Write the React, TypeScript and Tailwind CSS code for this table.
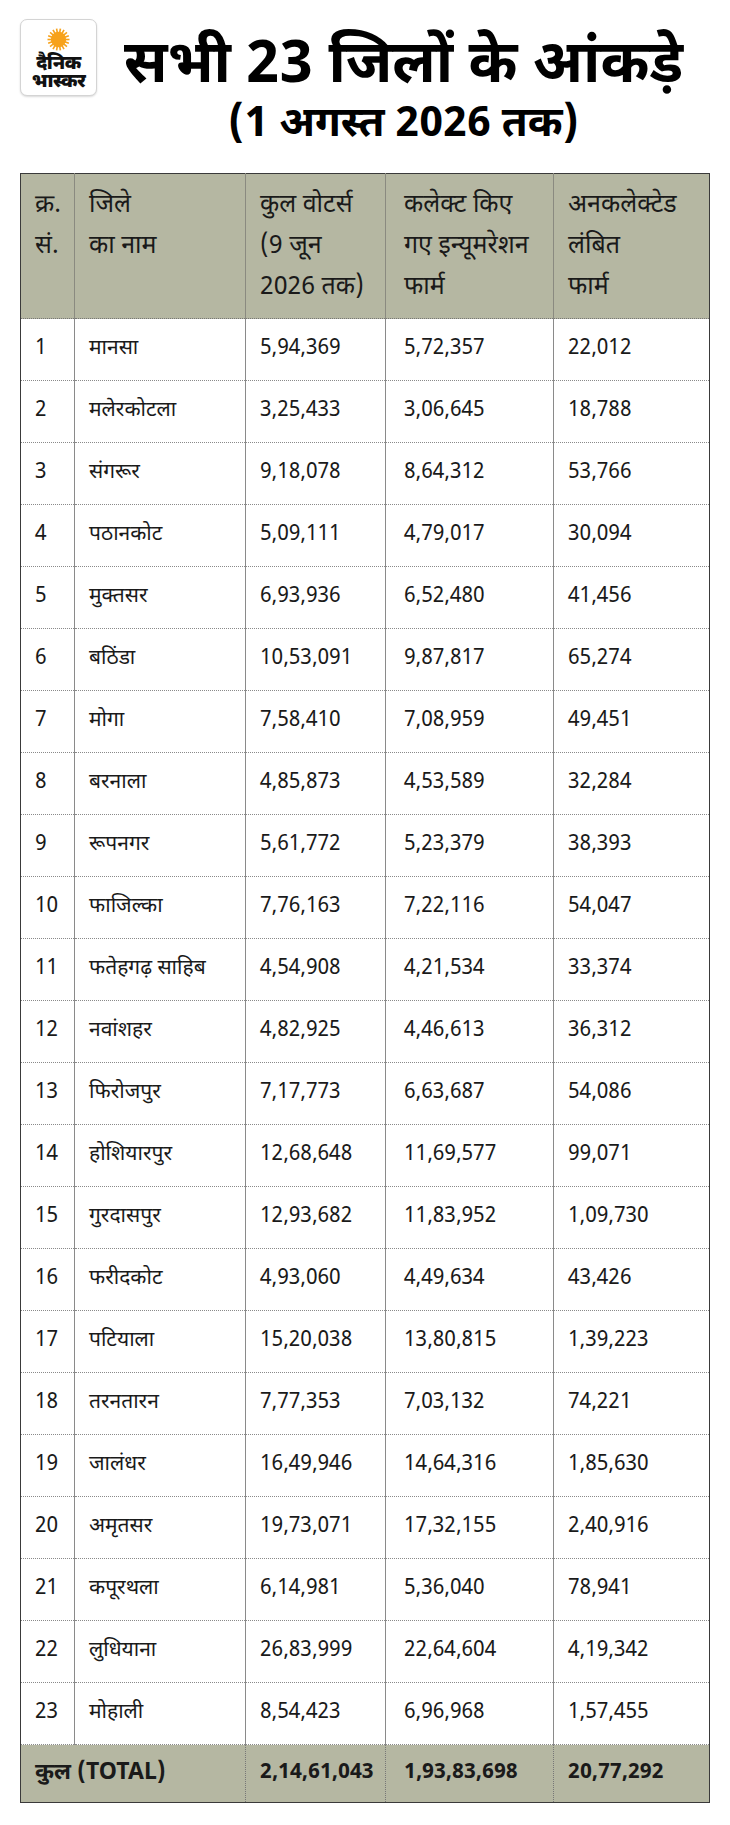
import React from "react";

const rows: [string, string, string, string, string][] = [
  ["1", "मानसा", "5,94,369", "5,72,357", "22,012"],
  ["2", "मलेरकोटला", "3,25,433", "3,06,645", "18,788"],
  ["3", "संगरूर", "9,18,078", "8,64,312", "53,766"],
  ["4", "पठानकोट", "5,09,111", "4,79,017", "30,094"],
  ["5", "मुक्तसर", "6,93,936", "6,52,480", "41,456"],
  ["6", "बठिंडा", "10,53,091", "9,87,817", "65,274"],
  ["7", "मोगा", "7,58,410", "7,08,959", "49,451"],
  ["8", "बरनाला", "4,85,873", "4,53,589", "32,284"],
  ["9", "रूपनगर", "5,61,772", "5,23,379", "38,393"],
  ["10", "फाजिल्का", "7,76,163", "7,22,116", "54,047"],
  ["11", "फतेहगढ़ साहिब", "4,54,908", "4,21,534", "33,374"],
  ["12", "नवांशहर", "4,82,925", "4,46,613", "36,312"],
  ["13", "फिरोजपुर", "7,17,773", "6,63,687", "54,086"],
  ["14", "होशियारपुर", "12,68,648", "11,69,577", "99,071"],
  ["15", "गुरदासपुर", "12,93,682", "11,83,952", "1,09,730"],
  ["16", "फरीदकोट", "4,93,060", "4,49,634", "43,426"],
  ["17", "पटियाला", "15,20,038", "13,80,815", "1,39,223"],
  ["18", "तरनतारन", "7,77,353", "7,03,132", "74,221"],
  ["19", "जालंधर", "16,49,946", "14,64,316", "1,85,630"],
  ["20", "अमृतसर", "19,73,071", "17,32,155", "2,40,916"],
  ["21", "कपूरथला", "6,14,981", "5,36,040", "78,941"],
  ["22", "लुधियाना", "26,83,999", "22,64,604", "4,19,342"],
  ["23", "मोहाली", "8,54,423", "6,96,968", "1,57,455"],
];

const font = { fontFamily: '"Noto Sans Devanagari", "Noto Sans", "Open Sans", sans-serif' };

function Logo() {
  const rays = Array.from({ length: 18 }, (_, i) => i * 20);
  return (
    <div className="w-[77px] h-[77px] shrink-0 rounded-[7px] border border-[#d4d4d4] bg-white flex flex-col items-center pt-[8px] shadow-[0_1px_2px_rgba(0,0,0,0.15)]">
      <svg width="23" height="23" viewBox="0 0 24 24">
        {rays.map((a) => (
          <line
            key={a}
            x1="12"
            y1="12"
            x2={12 + 11.5 * Math.cos((a * Math.PI) / 180)}
            y2={12 + 11.5 * Math.sin((a * Math.PI) / 180)}
            stroke="#f7a21b"
            strokeWidth="1.7"
          />
        ))}
        <circle cx="12" cy="12" r="8" fill="#f7a21b" />
      </svg>
      <div className="text-[19px] leading-[18px] font-black text-[#111] mt-[5px] tracking-[-0.5px]" style={font}>दैनिक</div>
      <div className="text-[19px] leading-[18px] font-black text-[#111] tracking-[-0.5px]" style={font}>भास्कर</div>
    </div>
  );
}

export default function App() {
  return (
    <div className="w-[730px] h-[1825px] bg-white text-[#1a1a1a]" style={font}>
      <div className="flex h-[173px] pl-[20px] pr-[20px] pt-[19px]">
        <Logo />
        <div className="flex-1 flex flex-col items-center pt-[15px]">
          <div className="text-[59px] leading-[68px] font-bold text-black whitespace-nowrap">सभी 23 जिलों के आंकड़े</div>
          <div className="text-[42px] leading-[48px] font-bold text-black whitespace-nowrap">(1 अगस्त 2026 तक)</div>
        </div>
      </div>
      <div className="px-[20px]">
        <table className="table-fixed border-collapse w-[689px] border border-[#3a3a3a]">
          <colgroup>
            <col className="w-[54px]" />
            <col className="w-[171px]" />
            <col className="w-[140px]" />
            <col className="w-[168px]" />
            <col className="w-[156px]" />
          </colgroup>
          <thead>
            <tr className="bg-[#b5b7a2] h-[145px] align-top text-[25px] leading-[41px] border-b border-dotted border-[#777]">
              <th className="font-normal text-left pl-[14px] pt-[12px] border-r border-[#8a8a80]">क्र.<br />सं.</th>
              <th className="font-normal text-left pl-[14px] pt-[12px] border-r border-[#8a8a80]">जिले<br />का नाम</th>
              <th className="font-normal text-left pl-[14px] pt-[12px] border-r border-[#8a8a80] whitespace-nowrap">कुल वोटर्स<br />(9 जून<br />2026 तक)</th>
              <th className="font-normal text-left pl-[18px] pt-[12px] border-r border-[#8a8a80] whitespace-nowrap">कलेक्ट किए<br />गए इन्यूमरेशन<br />फार्म</th>
              <th className="font-normal text-left pl-[14px] pt-[12px] whitespace-nowrap">अनकलेक्टेड<br />लंबित<br />फार्म</th>
            </tr>
          </thead>
          <tbody>
            {rows.map((r) => (
              <tr key={r[0]} className="h-[62px] text-[21px] border-b border-dotted border-[#8a8a8a]">
                <td className="pl-[14px] border-r border-[#8a8a8a]">{r[0]}</td>
                <td className="pl-[14px] border-r border-[#8a8a8a] whitespace-nowrap">{r[1]}</td>
                <td className="pl-[14px] border-r border-[#8a8a8a]">{r[2]}</td>
                <td className="pl-[18px] border-r border-[#8a8a8a]">{r[3]}</td>
                <td className="pl-[14px]">{r[4]}</td>
              </tr>
            ))}
            <tr className="h-[58px] bg-[#b5b7a2] text-[21px] font-bold">
              <td colSpan={2} className="pl-[14px] text-[23px] border-r border-dotted border-[#777]">कुल (TOTAL)</td>
              <td className="pl-[14px] border-r border-dotted border-[#777]">2,14,61,043</td>
              <td className="pl-[18px] border-r border-dotted border-[#777]">1,93,83,698</td>
              <td className="pl-[14px]">20,77,292</td>
            </tr>
          </tbody>
        </table>
      </div>
    </div>
  );
}
